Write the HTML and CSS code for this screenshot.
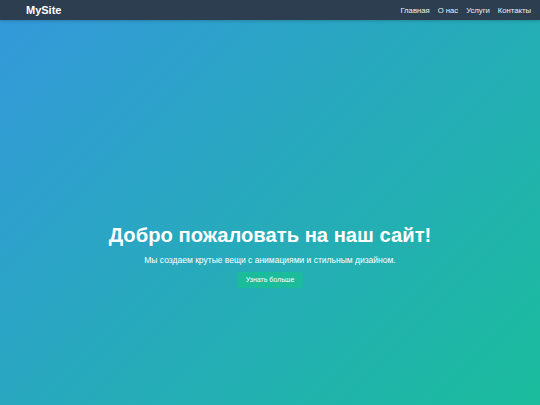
FILE: index.html
```html
<!DOCTYPE html>
<html lang="ru">
<head>
<meta charset="utf-8">
<title>MySite</title>
<link rel="stylesheet" href="styles.css">
</head>
<body>
<header class="navbar">
  <div class="logo">MySite</div>
  <nav class="menu">
    <a href="#">Главная</a>
    <a href="#">О нас</a>
    <a href="#">Услуги</a>
    <a href="#">Контакты</a>
  </nav>
</header>
<main class="hero">
  <h1 class="title">Добро пожаловать на наш сайт!</h1>
  <p class="subtitle">Мы создаем крутые вещи с анимациями и стильным дизайном.</p>
  <a class="btn" href="#">Узнать больше</a>
</main>
</body>
</html>
```
FILE: styles.css
```css
html, body {
  margin: 0;
  padding: 0;
  height: 100%;
}
body {
  font-family: "Liberation Sans", Arial, sans-serif;
  display: flex;
  flex-direction: column;
  background: linear-gradient(135deg, #3498db, #1abc9c);
  overflow: hidden;
}
.navbar {
  height: 20px;
  background: #2c3e50;
  display: flex;
  align-items: center;
  justify-content: space-between;
  padding: 0 9px 0 26px;
  box-shadow: 0 1px 3px rgba(0,0,0,0.2);
}
.logo {
  color: #fff;
  font-weight: bold;
  font-size: 11px;
}
.menu {
  display: flex;
  gap: 8px;
}
.menu a {
  color: #ecf0f1;
  text-decoration: none;
  font-size: 7.7px;
}
.hero {
  flex: 1;
  display: flex;
  flex-direction: column;
  align-items: center;
  padding-top: 202px;
  color: #fff;
}
.title {
  margin: 0;
  font-size: 20.2px;
  font-weight: bold;
  line-height: 26px;
}
.subtitle {
  margin: 6px 0 0;
  font-size: 8.5px;
  line-height: 12px;
}
.btn {
  margin-top: 6px;
  display: inline-block;
  padding: 4px 9px;
  background: #1abc9c;
  color: #fff;
  text-decoration: none;
  font-size: 7px;
  line-height: 8px;
  border-radius: 3px;
}
```
